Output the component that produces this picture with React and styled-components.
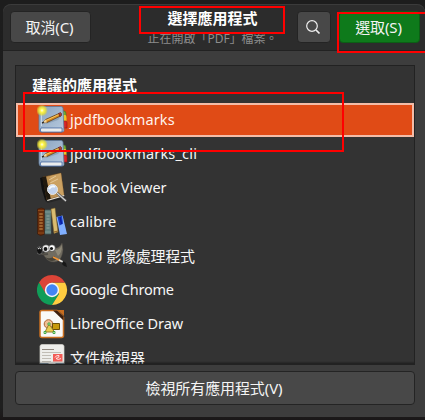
import React from "react";
import styled, { createGlobalStyle } from "styled-components";

const GlobalStyle = createGlobalStyle`
  * { box-sizing: border-box; }
  body {
    margin: 0;
    background: #1f1d1e;
    overflow: hidden;
    font-family: "Noto Sans", "Noto Sans CJK TC", sans-serif;
  }
`;

const Desktop = styled.div`
  position: relative;
  width: 425px;
  height: 420px;
  padding: 4px 0 3px 3px;
  overflow: hidden;
  background: linear-gradient(#1d1d1d, #1f1f1f 97%, #1a1718);
`;

const Dialog = styled.div`
  display: flex;
  flex-direction: column;
  height: 413px;
  background: #3d3d3d;
  border-radius: 8px 8px 0 0;
  overflow: hidden;
`;

const HeaderBar = styled.header`
  display: grid;
  grid-template-columns: 81px 1fr 34px 81px;
  column-gap: 8px;
  flex: none;
  height: 47px;
  padding: 7px 5px 0 7px;
  background: #2c2c2c;
  border: solid #222;
  border-width: 0 0 1px;
  border-radius: 8px 8px 0 0;
  box-shadow: inset 0 1px #3b3b3b;
`;

const Button = styled.button`
  display: flex;
  align-items: center;
  justify-content: center;
  width: 100%;
  height: ${(p) => p.$height || 32}px;
  padding: 0 2px 0 0;
  color: #f4f4f4;
  font: 15px/20px "Noto Sans", "Noto Sans CJK TC", sans-serif;
  letter-spacing: -0.1px;
  background: ${(p) => (p.$suggested ? "#0e7a1b" : "#484848")};
  border: 1px solid ${(p) => (p.$suggested ? "#0b5f15" : "#242424")};
  border-radius: 4px;
`;

const TitleBox = styled.div`
  display: flex;
  flex-direction: column;
  align-items: center;
  margin: -4px 0 0 37px;
  white-space: nowrap;
`;

const Title = styled.h1`
  margin: 0;
  color: #fff;
  font: bold 15px/22px "Noto Sans CJK TC", sans-serif;
`;

const Subtitle = styled.div`
  margin-top: 1px;
  color: #8d8d8d;
  font: 12px/17px "Noto Sans", "Noto Sans CJK TC", sans-serif;
`;

const Content = styled.main`
  display: flex;
  flex-direction: column;
  gap: 6px;
  padding: 14px 10px 0 12px;
  height: 366px;
`;

const AppList = styled.section`
  position: relative;
  width: 400px;
  height: 300px;
  background: #333;
  border: 1px solid #222;
  overflow: hidden;
  &::after {
    content: "";
    position: absolute;
    inset: auto 0 0;
    height: 3px;
    background: linear-gradient(transparent, rgba(0, 0, 0, 0.4));
  }
`;

const Heading = styled.h2`
  height: 37px;
  margin: 0;
  padding: 8px 0 0 16px;
  color: #fff;
  font: bold 15px/22px "Noto Sans CJK TC", sans-serif;
`;

const Row = styled.div`
  display: flex;
  align-items: center;
  gap: 1px;
  height: 34px;
  padding-left: ${(p) => (p.$selected ? 19 : 21)}px;
  background: ${(p) => (p.$selected ? "#e04b16" : "transparent")};
  border: ${(p) => (p.$selected ? "2px solid #f4bca8" : "0")};
`;

const IconSlot = styled.svg`
  flex: none;
  width: 32px;
  height: 32px;
`;

const Label = styled.span`
  padding-bottom: ${(p) => (p.$cjk ? 0 : 2)}px;
  color: ${(p) => (p.$selected ? "#fff3ed" : "#f6f6f6")};
  font: ${(p) => (p.$cjk ? 15 : 14.5)}px/22px "Noto Sans", "Noto Sans CJK TC", sans-serif;
  letter-spacing: ${(p) => p.$spacing || 0}px;
  white-space: nowrap;
`;

const Highlight = styled.div`
  position: absolute;
  left: ${(p) => p.$x}px;
  top: ${(p) => p.$y}px;
  width: ${(p) => p.$w}px;
  height: ${(p) => p.$h}px;
  border: 2px solid #f00;
  pointer-events: none;
`;

function BookmarksIcon() {
  return (
    <IconSlot viewBox="0 0 32 32">
      <defs>
        <radialGradient id="glow">
          <stop offset="0" stopColor="#fffef0" />
          <stop offset=".3" stopColor="#fff64a" />
          <stop offset=".65" stopColor="#efe32c" stopOpacity=".75" />
          <stop offset="1" stopColor="#d4d04a" stopOpacity="0" />
        </radialGradient>
        <linearGradient id="cover" x2="1" y2="1">
          <stop stopColor="#8aa3c0" />
          <stop offset="1" stopColor="#b8cbdf" />
        </linearGradient>
      </defs>
      <path d="M25 7h2q2 0 2 3v4h-3z" fill="#73ad32" stroke="#426d20" strokeWidth=".6" />
      <path d="M26 11h2q1.500 0 1.500 3v4H26z" fill="#ecc528" />
      <path d="M26 17h3q1 0 1 2v5h-4z" fill="#dc2424" stroke="#8d1717" strokeWidth=".6" />
      <path d="M5 2.500h19q2 0 2 2l1 22q0 1.500-2 1.500H4q-2 0-2-3V5.500q0-3 3-3z" fill="url(#cover)" stroke="#5f7a9a" strokeWidth=".8" />
      <path d="M4 24h21v4H4q-1.500-2 0-4z" fill="#f8f8f6" stroke="#3c5f9c" strokeWidth=".8" />
      <path d="M4 26h20" stroke="#c9d0d8" strokeWidth=".6" />
      <path d="M4.500 5v17" stroke="#c6d6e5" />
      <path d="m9 20 12-4 4-5-2-2-12 6z" fill="#5a6d80" opacity=".3" />
      <path d="m5 19 3.500-3.500L22 9.500l1.500 2.500L10 18.500z" fill="#d78a1f" stroke="#543512" strokeWidth=".7" />
      <path d="m9 16.500 13-6" stroke="#f5c660" />
      <path d="m5 19 3.500-3.500 1.500 3z" fill="#edd3a0" />
      <path d="m5 19 2-1" stroke="#222" strokeWidth="1.300" />
      <path d="m21.500 9.500 2-1q1.500.5 1 3l-1.500 1z" fill="#b83b30" stroke="#5e211b" strokeWidth=".6" />
      <circle cx="5" cy="6.500" r="6" fill="url(#glow)" />
    </IconSlot>
  );
}

function EbookIcon() {
  return (
    <IconSlot viewBox="0 0 32 32">
      <path d="m9 27 17-3 3 2-18 5-3-2z" fill="#1a1a1a" opacity=".5" />
      <path d="m3 6 3-1 5 24-3-1Q4 17 3 6z" fill="#101010" />
      <path d="m6 5 18-4 3 22-17 5z" fill="#bd9153" stroke="#67451f" strokeWidth=".6" />
      <path d="m13 4 11-3 3 22-6 2Q13 14 13 4z" fill="#d4ac6d" opacity=".6" />
      <path d="m5 5 4-.7L14 28l-4 1z" fill="#20190f" />
      <path d="m10 28 17-5 .5 1-17 5z" fill="#eee6d9" />
      <path d="m12 8 7-4M13 11l8-4" stroke="#f0d9ae" strokeWidth=".7" />
      <path d="m20 21 9 8" stroke="#555" strokeWidth="2.400" />
      <path d="m20 21 9 8" stroke="#d4d4d4" strokeWidth="1.200" />
      <circle cx="15.500" cy="17.500" r="5" fill="#c1d2ed" stroke="#e8e8e8" />
      <path d="M12 17q3-4 6-2" fill="none" stroke="#f4faff" strokeWidth="2" />
    </IconSlot>
  );
}

function CalibreIcon() {
  return (
    <IconSlot viewBox="0 0 32 32">
      <path d="M.500 3q4-2 7 0v25q-4 3-7 0z" fill="#672c0b" stroke="#36190a" strokeWidth=".6" />
      <path d="M1 4.500h6M1 27h6" stroke="#8f4a1c" />
      <path d="M2.500 8h3M2.500 11h3M2.500 14h3M2.500 17h3M2.500 20h3M2.500 23h3" stroke="#d29b53" strokeWidth="1.500" />
      <path d="M4 7v17" stroke="#743513" strokeWidth=".7" />
      <path d="M8 4h6v24H8z" fill="#607f7d" stroke="#4a6261" strokeWidth=".6" />
      <path d="M8 6h6M8 26h6" stroke="#7c9894" />
      <path d="M9.500 10h3M9.500 13h3M9.500 16h3M9.500 19h3M9.500 22h3" stroke="#9fb1a8" strokeWidth=".8" />
      <path d="m14 3 4-1 3 24-4 1.500z" fill="#d9bc70" stroke="#826629" strokeWidth=".5" />
      <path d="m17 26 4-1" stroke="#8d5f24" />
      <path d="m19.500 11 6-1.500L30 28l-7 1z" fill="#80afff" />
      <path d="m20.500 11 4.500-1.200 1 8-3.500 1.700z" fill="#183fc5" />
      <path d="m23 11 1.500 7" stroke="#0b1fa0" strokeWidth="1.400" />
    </IconSlot>
  );
}

function GimpIcon() {
  return (
    <IconSlot viewBox="0 0 32 32">
      <path d="M6 14q4-6 11-6 5 1 8-5 2 7 0 12-2 7-8 7-6 0-9-5z" fill="#716c60" stroke="#4c4942" strokeWidth=".5" />
      <path d="M18 10q5 0 7-5 0 8-4 11z" fill="#8f8978" />
      <path d="M8 17q5 3 9-1l3 3q-6 5-12-2z" fill="#464238" />
      <path d="M3 13q3 2 8 1" stroke="#4f4c45" strokeWidth="2" fill="none" />
      <ellipse cx="2.500" cy="10.500" rx="3" ry="3.800" fill="#111" stroke="#888" strokeWidth=".6" />
      <path d="M1 9q1.500-2 3 0" stroke="#eee" fill="none" />
      <circle cx="9" cy="8.500" r="3.800" fill="#eee" stroke="#333" strokeWidth=".6" />
      <circle cx="15" cy="8" r="3.300" fill="#fff" stroke="#333" strokeWidth=".6" />
      <circle cx="8.500" cy="9" r="1.900" fill="#161616" />
      <circle cx="14.500" cy="8.500" r="1.600" fill="#161616" />
      <path d="m16 17 8 4" stroke="#f39535" strokeWidth="1.600" />
      <path d="m22 20 4 2" stroke="#dfe1df" strokeWidth="1.800" />
      <path d="m26 21 3 2 1 4q-3 0-5-3z" fill="#181818" />
    </IconSlot>
  );
}

function ChromeIcon() {
  return (
    <IconSlot viewBox="0 0 32 32">
      <path d="M2 8.500A15 15 0 0 0 15 31l7-11-7-4z" fill="#109d58" />
      <path d="M15 8.500h13A15 15 0 0 1 15 31l7-11z" fill="#ffcd40" />
      <path d="M2 8.500 9 20l6-11.500h13A15 15 0 0 0 2 8.500z" fill="#dc4437" />
      <circle cx="15" cy="16" r="7.200" fill="#f5f5f5" />
      <circle cx="15" cy="16" r="5.700" fill="#4285f4" />
    </IconSlot>
  );
}

function DrawIcon() {
  return (
    <IconSlot viewBox="0 0 32 32">
      <path d="M5 2.500h15l6.500 7v18q0 2-2 2H5q-2 0-2-2v-23q0-2 2-2z" fill="#f9f9f7" stroke="#c96f20" strokeWidth="1.500" />
      <path d="M16 2.500h4l6.500 6v4z" fill="#3d200f" />
      <path d="M20.500 2h6.500v6z" fill="#c66d20" />
      <circle cx="11.500" cy="16" r="4.300" fill="#efbf93" stroke="#ae6531" />
      <path d="M15.500 15.500h7v6h-7z" fill="#c89a0c" stroke="#6b4f07" />
      <path d="m8 24 4-8 5.500 8z" fill="#e7cc4e" stroke="#9a7c28" />
      <path d="M11 15h2v2h-2zM7 23.500h2v2H7zM16 23.500h2v2h-2z" fill="#dfffc7" stroke="#279a31" strokeWidth=".8" />
    </IconSlot>
  );
}

function DocumentIcon() {
  return (
    <IconSlot viewBox="0 0 32 32">
      <path d="M5 2.500h20q2 0 2 2V31H3V4.500q0-2 2-2z" fill="#eeeeeb" stroke="#d5d4cd" strokeWidth=".7" />
      <path d="M5 7.500h12" stroke="#918980" />
      <path d="M5 10.500h19M5 13.500h9M5 16.500h9M5 19.500h9" stroke="#b5b0a7" strokeWidth=".8" />
      <path d="M16 12h9.500v7.500H16z" fill="#f25b55" />
      <path d="M18 15.500q1-2.500 4-2 1 2-3 3 2 2 5 0" fill="none" stroke="#fff" strokeWidth=".8" />
      <path d="M3 21.500h8l2 1h4l2-1h8V31H3z" fill="#173f60" />
    </IconSlot>
  );
}

const apps = [
  { name: "jpdfbookmarks", icon: BookmarksIcon, selected: true, spacing: 0.12 },
  { name: "jpdfbookmarks_cli", icon: BookmarksIcon, spacing: 0.18 },
  { name: "E-book Viewer", icon: EbookIcon, spacing: 0 },
  { name: "calibre", icon: CalibreIcon, spacing: 0.15 },
  { name: "GNU 影像處理程式", icon: GimpIcon, cjk: true, spacing: -0.25 },
  { name: "Google Chrome", icon: ChromeIcon, spacing: -0.25 },
  { name: "LibreOffice Draw", icon: DrawIcon, spacing: -0.05 },
  { name: "文件檢視器", icon: DocumentIcon, cjk: true, spacing: 0 },
];

export default function App() {
  return (
    <>
      <GlobalStyle />
      <Desktop>
        <Dialog>
          <HeaderBar>
            <Button>取消(C)</Button>
            <TitleBox>
              <Title>選擇應用程式</Title>
              <Subtitle>正在開啟「PDF」檔案。</Subtitle>
            </TitleBox>
            <Button aria-label="Search">
              <svg width="16" height="16" viewBox="0 0 16 16" fill="none" stroke="#eee" strokeWidth="1.200">
                <circle cx="7" cy="7" r="5.300" />
                <path d="m11 11 3.500 3.500" strokeWidth="1.700" />
              </svg>
            </Button>
            <Button $suggested>選取(S)</Button>
          </HeaderBar>
          <Content>
            <AppList>
              <Heading>建議的應用程式</Heading>
              {apps.map(({ name, icon: Icon, selected, spacing, cjk }) => (
                <Row key={name} $selected={selected}>
                  <Icon />
                  <Label $selected={selected} $spacing={spacing} $cjk={cjk}>{name}</Label>
                </Row>
              ))}
            </AppList>
            <Button $height={34}>檢視所有應用程式(V)</Button>
          </Content>
        </Dialog>
        <Highlight $x={139} $y={6} $w={146} $h={28} />
        <Highlight $x={337} $y={12} $w={92} $h={41} />
        <Highlight $x={23} $y={92} $w={321} $h={60} />
      </Desktop>
    </>
  );
}
